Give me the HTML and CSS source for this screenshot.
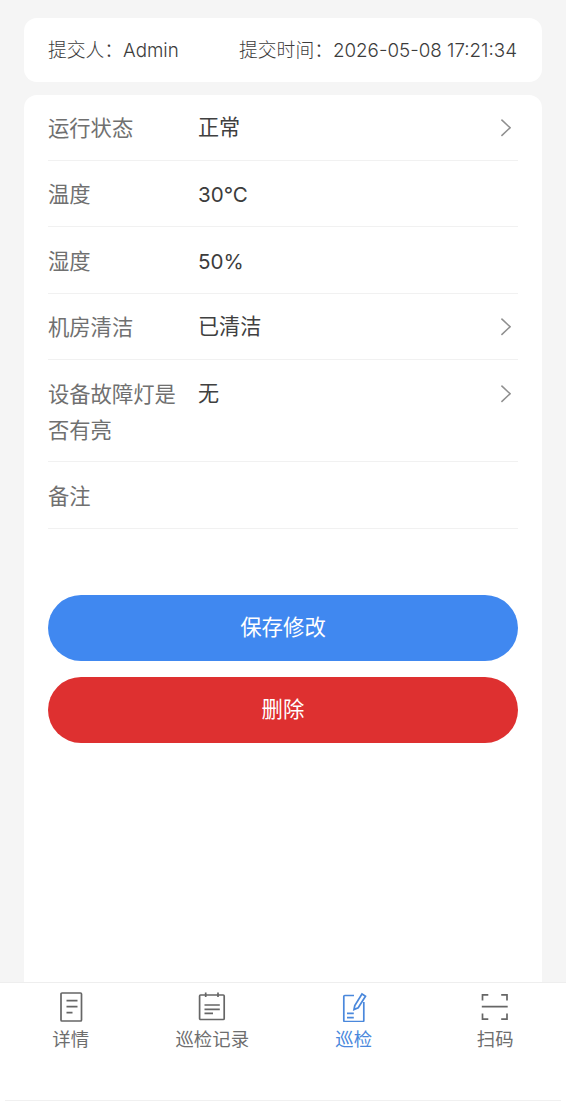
FILE: index.html
```html
<!DOCTYPE html>
<html lang="zh">
<head>
<meta charset="utf-8">
<title>巡检</title>
<link rel="stylesheet" href="styles.css">
</head>
<body>
<div class="page">
  <main class="content">
    <section class="meta card">
      <span>提交人：Admin</span>
      <span>提交时间：2026-05-08 17:21:34</span>
    </section>
    <section class="form card">
      <div class="row"><div class="label">运行状态</div><div class="value">正常</div>
        <svg class="chev" viewBox="0 0 12 20"><path d="M1.5 1.5 10.5 10 1.5 18.5"/></svg></div>
      <div class="row"><div class="label">温度</div><div class="value latin">30°C</div></div>
      <div class="row"><div class="label">湿度</div><div class="value latin">50%</div></div>
      <div class="row"><div class="label">机房清洁</div><div class="value">已清洁</div>
        <svg class="chev" viewBox="0 0 12 20"><path d="M1.5 1.5 10.5 10 1.5 18.5"/></svg></div>
      <div class="row"><div class="label">设备故障灯是否有亮</div><div class="value">无</div>
        <svg class="chev" viewBox="0 0 12 20"><path d="M1.5 1.5 10.5 10 1.5 18.5"/></svg></div>
      <div class="row"><div class="label">备注</div><div class="value"></div></div>
      <div class="actions">
        <button class="btn save">保存修改</button>
        <button class="btn del">删除</button>
      </div>
    </section>
  </main>
  <nav class="tabs">
    <div class="tab">
      <svg class="ico" viewBox="0 0 30 30"><rect x="5" y="1" width="20.500" height="28" rx="1"/><path d="M10.500 8.700h11M10.500 14.700h11M10.500 20.700h6"/></svg>
      <span>详情</span>
    </div>
    <div class="tab">
      <svg class="ico" viewBox="0 0 30 30"><rect x="2.600" y="3" width="24.600" height="24.500" rx="1"/><path d="M8.700 .5v4.500M21 .5v4.500M7.500 13h15.300M7.500 17.300h15.300M7.500 21.300h8.500"/></svg>
      <span>巡检记录</span>
    </div>
    <div class="tab on">
      <svg class="ico" viewBox="0 0 30 30"><path d="M15 3.500H5.800a1 1 0 0 0-1 1v24a1 1 0 0 0 1 1h18a1 1 0 0 0 1-1V10"/><path d="M15 17.500 15.800 13.500 23 2l3.500 2.200-7.300 11.500z"/><path d="M8 21.300h6.800M8 25.700h6.800"/></svg>
      <span>巡检</span>
    </div>
    <div class="tab">
      <svg class="ico" viewBox="0 0 30 30"><path d="M2.500 8.500V2.800h5.800M21.200 2.800h5.800v5.700M2.500 21.500v5.700h5.800M21.200 27.200h5.800v-5.700M1.800 14.700h25.900"/></svg>
      <span>扫码</span>
    </div>
  </nav>
</div>
</body>
</html>
```
FILE: styles.css
```css
* { box-sizing: border-box; }
html, body { margin: 0; padding: 0; height: 100%; }
body {
  background: #f5f5f5;
  font-family: "Noto Sans CJK SC", "Liberation Sans", sans-serif;
  color: #444;
}
.page { height: 1101px; display: flex; flex-direction: column; overflow: hidden; }
.content { flex: 1; min-height: 0; padding: 18px 24px 0; display: flex; flex-direction: column; gap: 13px; }
.card { background: #fff; border-radius: 13px; }
.meta {
  height: 64px;
  padding: 2px 25px 0 24px;
  display: flex;
  justify-content: space-between;
  align-items: center;
  font-size: 18.800px;
  line-height: 24px;
  color: #3c3c3c;
  font-family: "Inter", "Noto Sans CJK SC", sans-serif;
  font-weight: 300;
}
.form { flex: 1; padding: 0 24px; border-radius: 13px 13px 0 0; }
.row {
  display: flex;
  align-items: flex-start;
  padding: 14.700px 0 15.100px;
  border-bottom: 1px solid #f1f1f1;
  font-size: 21.300px;
  line-height: 35.700px;
}
.row:first-child { padding-top: 14px; }
.label { width: 150px; padding-right: 18px; color: #707070; flex: none; }
.value { flex: 1; color: #404040; font-family: "Noto Sans CJK SC", sans-serif; font-size: 21.100px; }
.latin { font-family: "Inter", "Noto Sans CJK SC", sans-serif; font-size: 20.600px; font-weight: 400; padding-top: 2px; margin-bottom: -2px; color: #3c3c3c; }
.chev { width: 11.500px; height: 19.500px; margin: 9px 7px 0 0; flex: none; fill: none; stroke: #8f8f8f; stroke-width: 1.600; }
.actions { padding-top: 66.500px; display: flex; flex-direction: column; gap: 16px; }
.btn {
  height: 66px;
  border: 0;
  border-radius: 33px;
  color: #fff;
  font: 21.400px/30px "Noto Sans CJK SC", sans-serif;
  padding: 0 0 4px;
}
.save { background: #4088f0; }
.del { background: #de3030; }
.tabs {
  height: 119px;
  flex: none;
  background: #fff;
  border-top: 1px solid #eeeeee;
  display: grid;
  grid-template-columns: repeat(4, 141.500px);
  position: relative;
}
.tabs::after {
  content: "";
  position: absolute;
  left: 5px;
  right: 5px;
  bottom: 0;
  height: 1px;
  background: #f0f0f0;
}
.tab { display: flex; flex-direction: column; align-items: center; padding-top: 9px; font-size: 18.400px; color: #6e6e6e; line-height: 28px; }
.tab span { margin-top: 2px; }
.ico { width: 30px; height: 30px; fill: none; stroke: #666; stroke-width: 1.700; display: block; }
.on { color: #4a88dc; }
.on .ico { stroke: #4a88dc; }
```
